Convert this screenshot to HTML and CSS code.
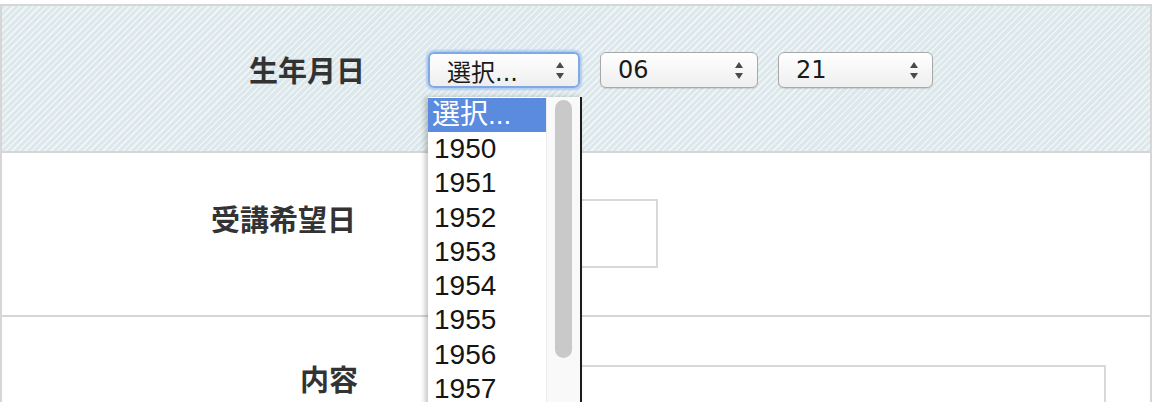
FILE: index.html
```html
<!DOCTYPE html>
<html>
<head>
    <meta charset="UTF-8">
    <title>お申し込みフォーム</title>
    <link rel="stylesheet" href="styles.css">
</head>
<body>
    <div class="form">
        <div class="row row--striped">
            <div class="label label--birth">生年月日</div>
            <div class="field">
                <div class="selects">
                    <div class="select-wrap">
                        <div class="select select--focus select--year">
                            <span>選択...</span>
                            <svg class="arrows" width="8" height="17" viewBox="0 0 8 17"><path d="M0 6 L4 0 L8 6 Z M0 11 L8 11 L4 17 Z"/></svg>
                        </div>
                        <div class="popup">
                            <ul class="options">
                                <li class="selected">選択...</li>
                                <li>1950</li>
                                <li>1951</li>
                                <li>1952</li>
                                <li>1953</li>
                                <li>1954</li>
                                <li>1955</li>
                                <li>1956</li>
                                <li>1957</li>
                            </ul>
                            <div class="scrollbar"><div class="thumb"></div></div>
                        </div>
                    </div>
                    <div class="select select--month">
                        <span>06</span>
                        <svg class="arrows" width="8" height="17" viewBox="0 0 8 17"><path d="M0 6 L4 0 L8 6 Z M0 11 L8 11 L4 17 Z"/></svg>
                    </div>
                    <div class="select select--day">
                        <span>21</span>
                        <svg class="arrows" width="8" height="17" viewBox="0 0 8 17"><path d="M0 6 L4 0 L8 6 Z M0 11 L8 11 L4 17 Z"/></svg>
                    </div>
                </div>
            </div>
        </div>
        <div class="row row--date">
            <div class="label label--date">受講希望日</div>
            <div class="field">
                <input type="text" class="text-input">
            </div>
        </div>
        <div class="row row--content">
            <div class="label label--content">内容</div>
            <div class="field">
                <textarea class="textarea"></textarea>
            </div>
        </div>
    </div>
</body>
</html>
```

FILE: styles.css
```css
html, body {
    margin: 0;
    padding: 0;
}

body {
    font-family: "Noto Sans CJK JP", sans-serif;
    background-color: #fff;
    overflow: hidden;
}

.form {
    margin: 4px 4px 0 0;
    border: solid #d6d6d6;
    border-width: 2px 2px 0 2px;
}

.row {
    display: grid;
    grid-template-columns: 426px 1fr;
    box-sizing: border-box;
    padding-top: 46px;
    border-bottom: 2px solid #d6d6d6;
}

.row--striped {
    height: 147px;
    background: repeating-linear-gradient(135deg, #dce8eb 0 3px, #eff5f6 3px 4.6px);
}

.row--date {
    height: 164px;
}

.row--content {
    height: 220px;
    border-bottom: none;
}

.label {
    font-size: 29px;
    line-height: 29px;
    font-weight: bold;
    color: #333;
    text-align: right;
    padding-top: 3px;
    padding-right: 63px;
}

.label--date {
    padding-right: 72px;
    padding-top: 5px;
}

.label--content {
    padding-right: 70px;
    padding-top: 1px;
}

.selects {
    display: flex;
    gap: 20px;
    align-items: flex-start;
}

.select-wrap {
    position: relative;
}

.select {
    box-sizing: border-box;
    height: 36px;
    display: flex;
    align-items: center;
    justify-content: space-between;
    padding: 0 14px 0 17px;
    border: 1.5px solid #a8a8a8;
    border-radius: 6px;
    background: linear-gradient(#ffffff, #eeeeee);
    box-shadow: 0 1px 1px rgba(0, 0, 0, 0.12);
    font: 24px "DejaVu Sans", "Noto Sans CJK JP", sans-serif;
    color: #1a1a1a;
}

.select--focus {
    border: 2px solid #7fa9e4;
    box-shadow: 0 0 2px 2px #b0cbf0;
}

.select--year {
    width: 152px;
}

.select--month {
    width: 158px;
}

.select--day {
    width: 155px;
}

.arrows {
    fill: #4a4a4a;
}

.popup {
    position: absolute;
    top: 45px;
    left: 0;
    z-index: 2;
    box-sizing: border-box;
    width: 154px;
    height: 310px;
    display: flex;
    background: #fff;
    border-right: 2px solid #1c1c1c;
    box-shadow: -3px 0 5px rgba(0, 0, 0, 0.22);
}

.options {
    width: 118px;
    margin: 0;
    padding: 1px 0 0;
    list-style: none;
    overflow: hidden;
    font: 28px/34.3px "Liberation Sans", "Noto Sans CJK JP", sans-serif;
    color: #151515;
}

.options li {
    height: 34.3px;
    padding-left: 6px;
}

.options .selected {
    height: 34px;
    padding-left: 4px;
    background: #5a8bdf;
    color: #fff;
}

.scrollbar {
    flex: 1;
    box-sizing: border-box;
    padding: 3px 0 0 8px;
    background: #f9f9f9;
    border-left: 1px solid #ececec;
}

.thumb {
    width: 17px;
    height: 258px;
    border-radius: 9px;
    background: #c9c9c9;
}

.text-input {
    box-sizing: border-box;
    display: block;
    width: 230px;
    height: 69px;
    margin: 0;
    border: 2px solid #d9d9d9;
    background: #fff;
}

.textarea {
    box-sizing: border-box;
    display: block;
    width: 678px;
    height: 160px;
    margin: 2px 0 0;
    border: 2px solid #d9d9d9;
    background: #fff;
    resize: none;
}
```
